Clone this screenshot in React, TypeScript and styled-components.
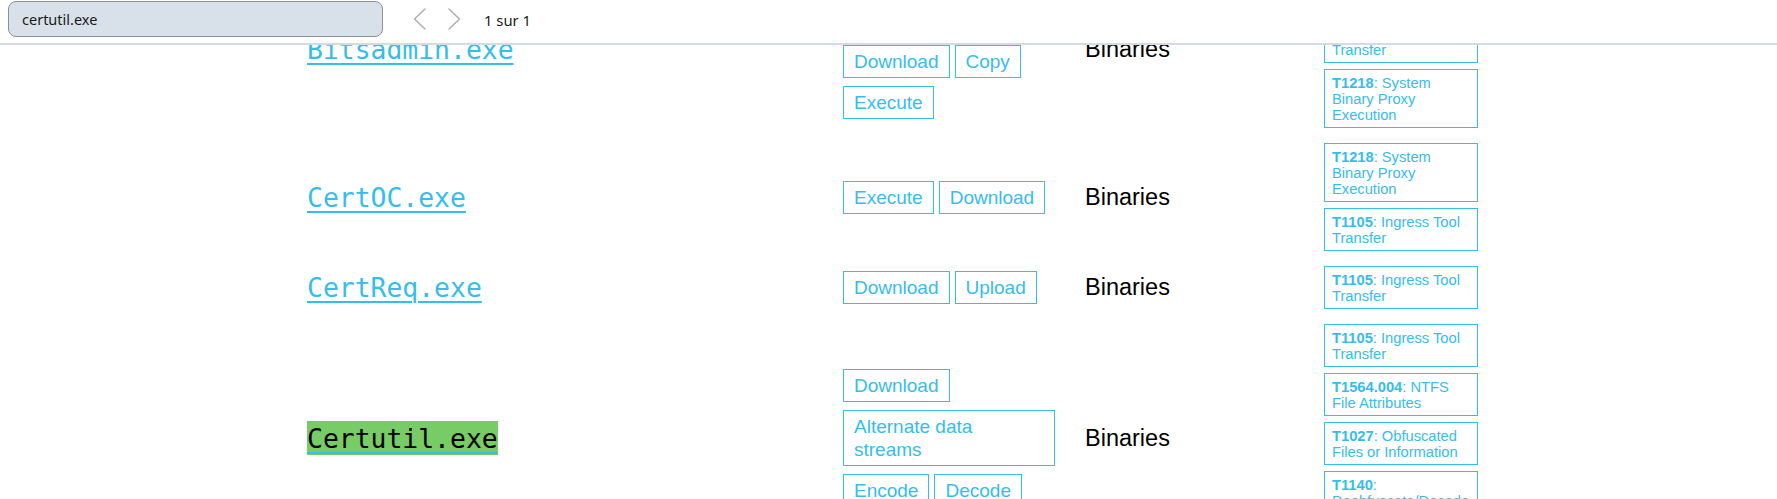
import React from "react";
import styled, { createGlobalStyle } from "styled-components";

const BLUE = "#35bdee";

const GlobalStyle = createGlobalStyle`
  html, body { margin: 0; padding: 0; background: #ffffff; overflow: hidden; }
  * { box-sizing: border-box; }
`;

const Page = styled.div`
  display: flex;
  flex-direction: column;
  height: 100vh;
  width: 100vw;
`;

const FindBar = styled.div`
  flex-shrink: 0;
  height: 45px;
  display: flex;
  align-items: flex-start;
  padding: 1px 0 0 8px;
  background: #ffffff;
  border-bottom: 2px solid #d3dce4;
  font-family: "Noto Sans", "Liberation Sans", sans-serif;
`;

const SearchBox = styled.div`
  width: 375px;
  height: 36px;
  display: flex;
  align-items: center;
  padding-left: 13px;
  background: #d8e1e9;
  border: 1px solid #8d9196;
  border-radius: 8px;
  font-size: 14.5px;
  color: #1b1b1b;
`;

const NavGroup = styled.div`
  display: flex;
  margin-left: 19px;
`;

const NavButton = styled.div`
  width: 35px;
  height: 36px;
  display: flex;
  align-items: center;
  justify-content: center;
  padding-bottom: 1px;
`;

const Counter = styled.div`
  height: 36px;
  display: flex;
  align-items: center;
  margin-left: 12px;
  padding-top: 2px;
  font-size: 14.8px;
  color: #1b1b1b;
`;

const Viewport = styled.div`
  flex: 1;
  overflow: hidden;
`;

const Table = styled.div`
  margin-top: -81.5px;
  padding-left: 307px;
`;

const Row = styled.div`
  display: grid;
  grid-template-columns: 536px 242px 239px 154px;
  align-items: center;
  padding: 7.5px 0;
`;

const NameLink = styled.a`
  justify-self: start;
  font-family: "DejaVu Sans Mono", "Liberation Mono", monospace;
  font-size: 26.4px;
  color: ${BLUE};
  text-decoration: underline;
  text-decoration-thickness: 2px;
  text-underline-offset: 4px;
`;

const Hit = styled.mark`
  background: #77cc66;
  color: #000000;
  padding: 2px 0 1px;
`;

const FuncList = styled.div`
  display: flex;
  flex-wrap: wrap;
  gap: 8px 5px;
  max-width: 212px;
`;

const FuncTag = styled.a`
  display: block;
  border: 1px solid ${BLUE};
  padding: 4px 10px;
  font-family: "Liberation Sans", Arial, sans-serif;
  font-size: 19px;
  line-height: 23px;
  color: ${BLUE};
  text-decoration: none;
`;

const TypeText = styled.div`
  font-family: "Liberation Sans", Arial, sans-serif;
  font-size: 23.5px;
  color: #000000;
`;

const AttackList = styled.div<{ $tail?: number }>`
  display: flex;
  flex-direction: column;
  gap: 6px;
  padding-bottom: ${(p) => p.$tail ?? 0}px;
`;

const AttackTag = styled.a`
  display: block;
  width: 154px;
  border: 1px solid ${BLUE};
  padding: 4.5px 7px;
  font-family: "Liberation Sans", Arial, sans-serif;
  font-size: 14.7px;
  line-height: 16px;
  color: ${BLUE};
  text-decoration: none;
  strong { font-weight: 700; }
`;

const Chevron = ({ dir }: { dir: "left" | "right" }) => (
  <svg width="13" height="22" viewBox="0 0 13 22" fill="none">
    <path
      d={dir === "left" ? "M12 1 L1.5 11 L12 21" : "M1 1 L11.5 11 L1 21"}
      stroke="#ababab"
      strokeWidth="1.4"
      strokeLinecap="round"
      strokeLinejoin="round"
    />
  </svg>
);

type Attack = { id: string; name: string };
type Entry = { name: string; hit?: boolean; funcs: string[]; attacks: Attack[]; tail?: number };

const ENTRIES: Entry[] = [
  {
    name: "Bitsadmin.exe",
    funcs: ["Alternate data streams", "Download", "Copy", "Execute"],
    attacks: [
      { id: "T1564.004", name: "NTFS File Attributes" },
      { id: "T1105", name: "Ingress Tool Transfer" },
      { id: "T1218", name: "System Binary Proxy Execution" },
    ],
  },
  {
    name: "CertOC.exe",
    funcs: ["Execute", "Download"],
    attacks: [
      { id: "T1218", name: "System Binary Proxy Execution" },
      { id: "T1105", name: "Ingress Tool Transfer" },
    ],
  },
  {
    name: "CertReq.exe",
    funcs: ["Download", "Upload"],
    attacks: [{ id: "T1105", name: "Ingress Tool Transfer" }],
  },
  {
    name: "Certutil.exe",
    hit: true,
    funcs: ["Download", "Alternate data streams", "Encode", "Decode"],
    attacks: [
      { id: "T1105", name: "Ingress Tool Transfer" },
      { id: "T1564.004", name: "NTFS File Attributes" },
      { id: "T1027", name: "Obfuscated Files or Information" },
      { id: "T1140", name: "Deobfuscate/Decode Files or Information" },
    ],
    tail: 22,
  },
];

export default function App() {
  return (
    <Page>
      <GlobalStyle />
      <FindBar>
        <SearchBox>certutil.exe</SearchBox>
        <NavGroup>
          <NavButton>
            <Chevron dir="left" />
          </NavButton>
          <NavButton>
            <Chevron dir="right" />
          </NavButton>
        </NavGroup>
        <Counter>1 sur 1</Counter>
      </FindBar>
      <Viewport>
        <Table>
          {ENTRIES.map((e) => (
            <Row key={e.name}>
              <NameLink href="#">{e.hit ? <Hit>{e.name}</Hit> : e.name}</NameLink>
              <FuncList>
                {e.funcs.map((f) => (
                  <FuncTag key={f} href="#">
                    {f}
                  </FuncTag>
                ))}
              </FuncList>
              <TypeText>Binaries</TypeText>
              <AttackList $tail={e.tail}>
                {e.attacks.map((a) => (
                  <AttackTag key={a.id} href="#">
                    <strong>{a.id}</strong>: {a.name}
                  </AttackTag>
                ))}
              </AttackList>
            </Row>
          ))}
        </Table>
      </Viewport>
    </Page>
  );
}
